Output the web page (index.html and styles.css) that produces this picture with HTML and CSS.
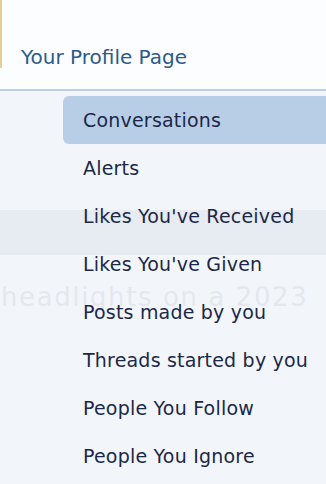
FILE: index.html
```html
<!DOCTYPE html>
<html lang="en">
<head>
<meta charset="utf-8">
<title>Account menu</title>
<link rel="stylesheet" href="styles.css">
</head>
<body>
<div class="page">
  <div class="backdrop" aria-hidden="true">
    <div class="band"></div>
    <div class="ghost">headlights on a 2023</div>
  </div>
  <header class="header">
    <div class="header-inner">
      <a class="profile-link" href="#">Your Profile Page</a>
    </div>
  </header>
  <nav class="menu">
    <a class="menu-item active" href="#">Conversations</a>
    <a class="menu-item" href="#">Alerts</a>
    <a class="menu-item" href="#">Likes You've Received</a>
    <a class="menu-item" href="#">Likes You've Given</a>
    <a class="menu-item" href="#">Posts made by you</a>
    <a class="menu-item" href="#">Threads started by you</a>
    <a class="menu-item" href="#">People You Follow</a>
    <a class="menu-item" href="#">People You Ignore</a>
  </nav>
</div>
</body>
</html>
```
FILE: styles.css
```css
html, body {
  margin: 0;
  padding: 0;
}
body {
  background: #f2f6fb;
  font-family: "DejaVu Sans", sans-serif;
  width: 326px;
  height: 484px;
  overflow: hidden;
}
.page {
  position: relative;
  height: 484px;
}
.backdrop {
  position: absolute;
  top: 0;
  left: 0;
  right: 0;
  bottom: 0;
  z-index: 0;
}
.band {
  position: absolute;
  top: 210px;
  left: 0;
  right: 0;
  height: 45px;
  background: #e7ebf2;
}
.ghost {
  position: absolute;
  top: 279px;
  left: 1px;
  font-size: 26px;
  letter-spacing: 1.6px;
  line-height: 36px;
  color: #e4e8ee;
  white-space: nowrap;
}
.header {
  position: relative;
  z-index: 1;
  height: 89px;
  background: #fcfdfe;
  border-bottom: 2px solid #b9cde3;
}
.header-inner {
  height: 68px;
  border-left: 2px solid #e3cf95;
  display: flex;
  align-items: flex-end;
  padding-left: 19px;
  box-sizing: border-box;
}
.profile-link {
  color: #2c5a8a;
  text-decoration: none;
  font-size: 20px;
  line-height: 24px;
  margin-bottom: -1px;
}
.menu {
  position: relative;
  z-index: 1;
  display: flex;
  flex-direction: column;
  padding-top: 5px;
  margin-left: 63px;
}
.menu-item {
  display: block;
  height: 48px;
  line-height: 48px;
  padding-left: 20px;
  font-size: 19px;
  letter-spacing: 0.2px;
  color: #1d2848;
  text-decoration: none;
  white-space: nowrap;
  border-radius: 6px 0 0 6px;
}
.menu-item.active {
  background: #b8cee6;
}
```
